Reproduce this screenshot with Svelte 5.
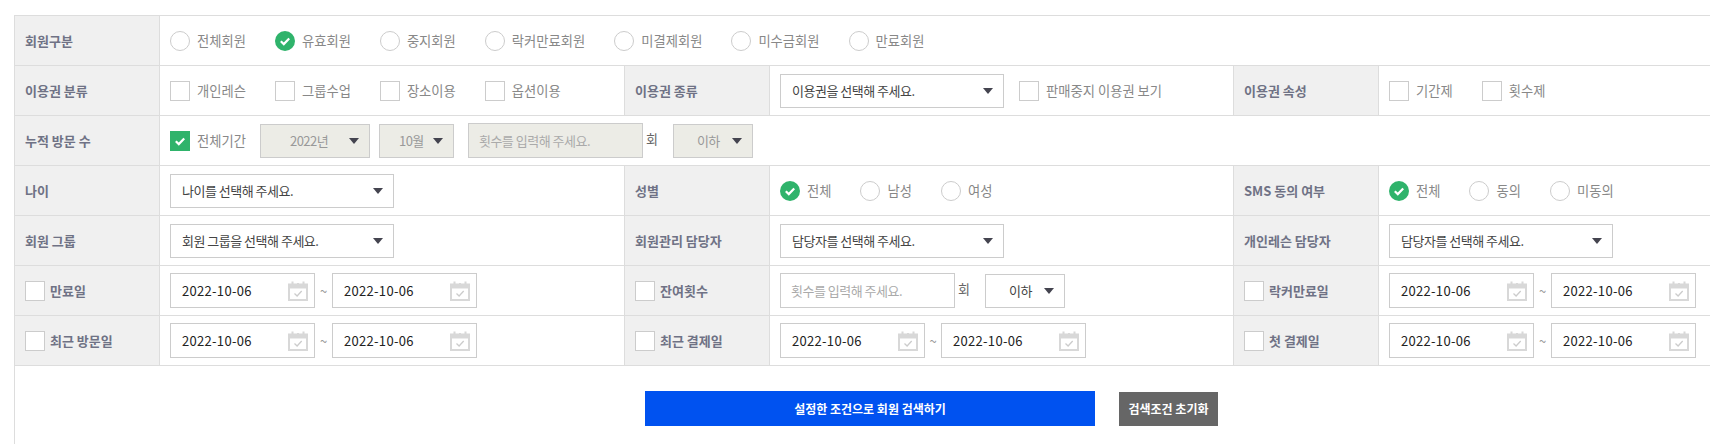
<script>
  const memberTypes = ['전체회원', '유효회원', '중지회원', '락커만료회원', '미결제회원', '미수금회원', '만료회원'];
  const DATE = '2022-10-06';
</script>

{#snippet radio(name, on = false)}
  <span class="opt">
    <span class="radio" class:on>
      {#if on}
        <svg viewBox="0 0 20 20" width="20" height="20"><path d="M5.8 10.2l3 2.9 5.4-5.6" /></svg>
      {/if}
    </span>
    <span class="txt">{name}</span>
  </span>
{/snippet}

{#snippet check(name, on = false)}
  <span class="opt">
    <span class="box" class:on>
      {#if on}
        <svg viewBox="0 0 20 20" width="20" height="20"><path d="M5.8 10.2l3 2.9 5.4-5.6" /></svg>
      {/if}
    </span>
    {#if name}<span class="txt">{name}</span>{/if}
  </span>
{/snippet}

{#snippet select(text, cls = 'w224')}
  <span class="select {cls}"><span class="val">{text}</span><i class="caret"></i></span>
{/snippet}

{#snippet date()}
  <span class="date">
    <input type="text" value={DATE} />
    <svg class="cal" viewBox="0 0 20 20" width="20" height="20">
      <path class="cal-frame" d="M1 3.5h18v15.5H1z" />
      <path class="cal-band" d="M1 3.5h18v4H1z" />
      <path class="cal-tab" d="M4.5 0.5v4M10 2v2M15.5 0.5v4" />
      <path class="cal-tick" d="M6.5 12.5l2.6 2.5 4.6-5" />
    </svg>
  </span>
{/snippet}

{#snippet range(cls)}
  <div class="range {cls}">
    {@render date()}
    <span class="tilde">~</span>
    {@render date()}
  </div>
{/snippet}

{#snippet checkLabel(text)}
  <div class="label with-box"><span class="box"></span><span>{text}</span></div>
{/snippet}

<div class="search">
  <div class="row">
    <div class="label">회원구분</div>
    <div class="cell wide">
      {#each memberTypes as t}
        {@render radio(t, t === '유효회원')}
      {/each}
    </div>
  </div>

  <div class="row">
    <div class="label">이용권 분류</div>
    <div class="cell">
      {@render check('개인레슨')}
      {@render check('그룹수업')}
      {@render check('장소이용')}
      {@render check('옵션이용')}
    </div>
    <div class="label mid">이용권 종류</div>
    <div class="cell">
      {@render select('이용권을 선택해 주세요.')}
      <span class="stop">{@render check('판매중지 이용권 보기')}</span>
    </div>
    <div class="label mid">이용권 속성</div>
    <div class="cell">
      {@render check('기간제')}
      {@render check('횟수제')}
    </div>
  </div>

  <div class="row">
    <div class="label">누적 방문 수</div>
    <div class="cell wide visits">
      {@render check('전체기간', true)}
      {@render select('2022년', 'off year')}
      {@render select('10월', 'off month')}
      <input class="count off" type="text" placeholder="횟수를 입력해 주세요." disabled />
      <span class="unit">회</span>
      {@render select('이하', 'off cmp')}
    </div>
  </div>

  <div class="row">
    <div class="label">나이</div>
    <div class="cell">{@render select('나이를 선택해 주세요.')}</div>
    <div class="label mid">성별</div>
    <div class="cell">
      {@render radio('전체', true)}
      {@render radio('남성')}
      {@render radio('여성')}
    </div>
    <div class="label mid">SMS 동의 여부</div>
    <div class="cell">
      {@render radio('전체', true)}
      {@render radio('동의')}
      {@render radio('미동의')}
    </div>
  </div>

  <div class="row">
    <div class="label">회원 그룹</div>
    <div class="cell">{@render select('회원 그룹을 선택해 주세요.')}</div>
    <div class="label mid">회원관리 담당자</div>
    <div class="cell">{@render select('담당자를 선택해 주세요.')}</div>
    <div class="label mid">개인레슨 담당자</div>
    <div class="cell">{@render select('담당자를 선택해 주세요.')}</div>
  </div>

  <div class="row">
    {@render checkLabel('만료일')}
    <div class="cell">{@render range('g1')}</div>
    <div class="mid-wrap">{@render checkLabel('잔여횟수')}</div>
    <div class="cell remain">
      <input class="count" type="text" placeholder="횟수를 입력해 주세요." />
      <span class="unit">회</span>
      {@render select('이하', 'cmp')}
    </div>
    <div class="mid-wrap">{@render checkLabel('락커만료일')}</div>
    <div class="cell">{@render range('g3')}</div>
  </div>

  <div class="row">
    {@render checkLabel('최근 방문일')}
    <div class="cell">{@render range('g1')}</div>
    <div class="mid-wrap">{@render checkLabel('최근 결제일')}</div>
    <div class="cell">{@render range('g2')}</div>
    <div class="mid-wrap">{@render checkLabel('첫 결제일')}</div>
    <div class="cell">{@render range('g3')}</div>
  </div>

  <div class="actions">
    <button class="primary" type="button">설정한 조건으로 회원 검색하기</button>
    <button class="reset" type="button">검색조건 초기화</button>
  </div>
</div>

<style>
  :global(body) {
    margin: 0;
    background: #fff;
    overflow: hidden;
  }
  .search {
    margin: 15px 0 0 14px;
    height: 429px;
    box-sizing: border-box;
    border-top: 1px solid #ddd;
    border-left: 1px solid #ddd;
    font-family: 'Noto Sans CJK KR', 'Noto Sans', sans-serif;
    font-size: 13px;
    color: #888;
  }
  .row {
    display: grid;
    grid-template-columns: 145px 464px 146px 463px 146px 1fr;
    height: 50px;
    box-sizing: border-box;
    border-bottom: 1px solid #ddd;
  }
  .label {
    display: flex;
    align-items: center;
    box-sizing: border-box;
    height: 100%;
    padding-left: 10px;
    background: #f0f0f0;
    border-right: 1px solid #ddd;
    font-weight: 700;
    color: #6f7285;
  }
  .label.mid,
  .mid-wrap .label {
    border-left: 1px solid #ddd;
  }
  .with-box {
    gap: 5px;
  }
  .cell {
    display: flex;
    align-items: center;
    padding-left: 10px;
    gap: 29px;
    min-width: 0;
  }
  .wide {
    grid-column: 2 / -1;
  }
  .opt {
    display: inline-flex;
    align-items: center;
    gap: 7px;
    white-space: nowrap;
  }
  .txt {
    font-size: 13.3px;
  }
  .radio,
  .box {
    flex: none;
    box-sizing: border-box;
    width: 20px;
    height: 20px;
    background: #fff;
    border: 1px solid #ccc;
    overflow: hidden;
  }
  .radio {
    border-radius: 50%;
  }
  .radio.on,
  .box.on {
    background: #2fb36b;
    border: 0;
  }
  .opt svg path {
    fill: none;
    stroke: #fff;
    stroke-width: 2.2;
  }
  .select {
    position: relative;
    display: inline-flex;
    align-items: center;
    flex: none;
    box-sizing: border-box;
    height: 34px;
    padding-left: 11px;
    background: #fff;
    border: 1px solid #ccc;
    color: #444;
    letter-spacing: -0.5px;
    white-space: nowrap;
  }
  .w224 {
    width: 224px;
  }
  .caret {
    position: absolute;
    right: 10px;
    top: 13px;
    width: 0;
    height: 0;
    border-left: 5px solid transparent;
    border-right: 5px solid transparent;
    border-top: 6px solid #44444f;
  }
  .off {
    background: #ecece6;
    color: #999;
  }
  .year {
    width: 110px;
    padding-left: 29px;
  }
  .month {
    width: 75px;
    padding-left: 19px;
  }
  .cmp {
    width: 80px;
    padding-left: 23px;
  }
  .stop {
    display: flex;
    margin-left: -14px;
  }
  .visits {
    gap: 0;
  }
  .visits .year {
    margin-left: 14px;
  }
  .visits .month {
    margin-left: 9px;
  }
  .visits .count {
    margin-left: 14px;
  }
  .count {
    flex: none;
    box-sizing: border-box;
    width: 175px;
    height: 35px;
    padding: 0 0 0 10px;
    border: 1px solid #ccc;
    background: #fff;
    font: inherit;
    letter-spacing: -0.5px;
    outline: none;
  }
  .count.off {
    background: #ecece6;
  }
  .count::placeholder {
    color: #aaa;
  }
  .unit {
    margin: -5px 15px 0 3px;
    color: #666;
  }
  .remain {
    gap: 0;
  }
  .range {
    display: flex;
    align-items: center;
  }
  .tilde {
    width: 17px;
    text-align: center;
    color: #999;
  }
  .g2 .tilde {
    width: 16px;
  }
  .date {
    position: relative;
    display: block;
    flex: none;
    width: 145px;
    height: 35px;
  }
  .date input {
    box-sizing: border-box;
    width: 100%;
    height: 100%;
    padding: 0 0 0 11px;
    border: 1px solid #ccc;
    background: #fff;
    font: inherit;
    letter-spacing: 0.3px;
    color: #222;
    outline: none;
  }
  .cal {
    position: absolute;
    right: 7px;
    top: 8px;
  }
  .cal-frame {
    fill: #fff;
    stroke: #d8d8d8;
    stroke-width: 2;
  }
  .cal-band {
    fill: #d8d8d8;
  }
  .cal-tab {
    fill: none;
    stroke: #d8d8d8;
    stroke-width: 2;
  }
  .cal-tick {
    fill: none;
    stroke: #ccc;
    stroke-width: 1.3;
  }
  .actions {
    display: flex;
    align-items: center;
    gap: 24px;
    padding: 25px 0 0 630px;
  }
  .actions button {
    border: 0;
    padding: 0;
    font-family: inherit;
    font-size: 12px;
    font-weight: 700;
    color: #fff;
  }
  .primary {
    width: 450px;
    height: 35px;
    background: #0052f0;
  }
  .reset {
    width: 99px;
    height: 34px;
    background: #666;
  }
</style>
